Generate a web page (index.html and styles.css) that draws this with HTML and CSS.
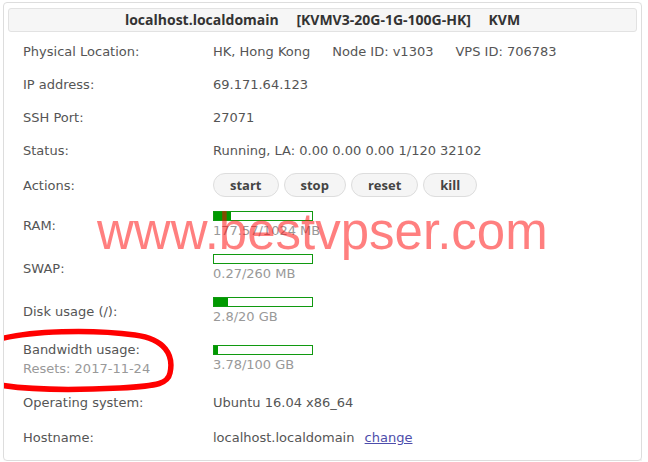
FILE: index.html
```html
<!DOCTYPE html>
<html lang="en">
<head>
    <meta charset="UTF-8">
    <title>VPS Control Panel</title>
    <link rel="stylesheet" href="styles.css">
</head>
<body>
    <div class="card">
        <div class="card-title">
            <span>localhost.localdomain</span>
            <span>[KVMV3-20G-1G-100G-HK]</span>
            <span>KVM</span>
        </div>
        <table class="info">
            <tr>
                <td class="label">Physical Location:</td>
                <td><span class="part">HK, Hong Kong</span><span class="part">Node ID: v1303</span><span>VPS ID: 706783</span></td>
            </tr>
            <tr>
                <td class="label">IP address:</td>
                <td>69.171.64.123</td>
            </tr>
            <tr>
                <td class="label">SSH Port:</td>
                <td>27071</td>
            </tr>
            <tr>
                <td class="label">Status:</td>
                <td>Running, LA: 0.00 0.00 0.00 1/120 32102</td>
            </tr>
            <tr class="actions-row">
                <td class="label">Actions:</td>
                <td>
                    <div class="actions">
                        <button>start</button>
                        <button>stop</button>
                        <button>reset</button>
                        <button>kill</button>
                    </div>
                </td>
            </tr>
            <tr>
                <td class="label">RAM:</td>
                <td>
                    <div class="bar"><div class="fill" style="width: 17%"></div></div>
                    <div class="caption">177.57/1024 MB</div>
                </td>
            </tr>
            <tr>
                <td class="label">SWAP:</td>
                <td>
                    <div class="bar"><div class="fill" style="width: 0%"></div></div>
                    <div class="caption">0.27/260 MB</div>
                </td>
            </tr>
            <tr>
                <td class="label">Disk usage (/):</td>
                <td>
                    <div class="bar"><div class="fill" style="width: 14%"></div></div>
                    <div class="caption">2.8/20 GB</div>
                </td>
            </tr>
            <tr>
                <td class="label">Bandwidth usage:<div class="muted">Resets: 2017-11-24</div></td>
                <td>
                    <div class="bar"><div class="fill" style="width: 4%"></div></div>
                    <div class="caption">3.78/100 GB</div>
                </td>
            </tr>
            <tr class="os-row">
                <td class="label">Operating system:</td>
                <td>Ubuntu 16.04 x86_64</td>
            </tr>
            <tr class="host-row">
                <td class="label">Hostname:</td>
                <td>localhost.localdomain <a href="#" class="change">change</a></td>
            </tr>
        </table>

        <div class="watermark">www.bestvpser.com</div>
        <svg class="scribble" width="200" height="80" viewBox="0 0 200 80">
            <path d="M0 14 C30 6, 90 4, 135 10 C165 14, 174 30, 170 48 C168 58, 160 61, 120 63 C80 65, 30 65, 0 60" fill="none" stroke="#f00" stroke-width="5.5" stroke-linecap="round"/>
        </svg>
    </div>
</body>
</html>
```

FILE: styles.css
```css
body {
    margin: 2px 0 0 3px;
    width: 639px;
    font-family: 'DejaVu Sans', Verdana, sans-serif;
    font-size: 13px;
    color: #555;
    background: #fff;
}
.card {
    position: relative;
    height: 447px;
    padding: 5px 4px 5px 4px;
    border: 1px solid #ddd;
    border-radius: 4px;
    box-shadow: 1px 1px 2px rgba(0, 0, 0, 0.08);
    overflow: hidden;
}
.card-title {
    height: 22px;
    line-height: 22px;
    text-align: center;
    background: #f6f6f6;
    border: 1px solid #e2e2e2;
    border-radius: 3px;
    font-family: 'Open Sans', sans-serif;
    font-weight: 700;
    font-size: 14px;
    color: #333;
}
.card-title span {
    margin: 0 7px;
}
.info {
    border-collapse: collapse;
    margin: 3px 0 0 15px;
}
.info td {
    padding: 7px 0;
    line-height: 19px;
    vertical-align: middle;
}
.info td.label {
    width: 190px;
}
.part {
    margin-right: 22px;
}
.actions-row td {
    padding: 6px 0 7px;
}
.os-row td {
    padding: 8px 0 7px;
}
.host-row td {
    padding: 9px 0 7px;
}
.actions {
    display: flex;
    gap: 5px;
}
.actions button {
    height: 24px;
    padding: 0 16px;
    border: 1px solid #ddd;
    border-radius: 12px;
    background: #f5f5f5;
    font-family: 'Open Sans', sans-serif;
    font-weight: 700;
    font-size: 13px;
    color: #444;
}
.bar {
    width: 98px;
    height: 8px;
    border: 1px solid #109910;
    background: #fff;
}
.fill {
    height: 100%;
    background: #009900;
}
.caption {
    color: #999;
}
.muted {
    color: #999;
}
.change {
    margin-left: 6px;
    color: #4d4dab;
}
.watermark {
    position: absolute;
    left: 93px;
    top: 199px;
    font-family: 'Liberation Sans', Arial, sans-serif;
    font-size: 51px;
    line-height: 60px;
    color: rgba(255, 0, 0, 0.5);
    pointer-events: none;
}
.scribble {
    position: absolute;
    left: -4px;
    top: 322px;
}
```
